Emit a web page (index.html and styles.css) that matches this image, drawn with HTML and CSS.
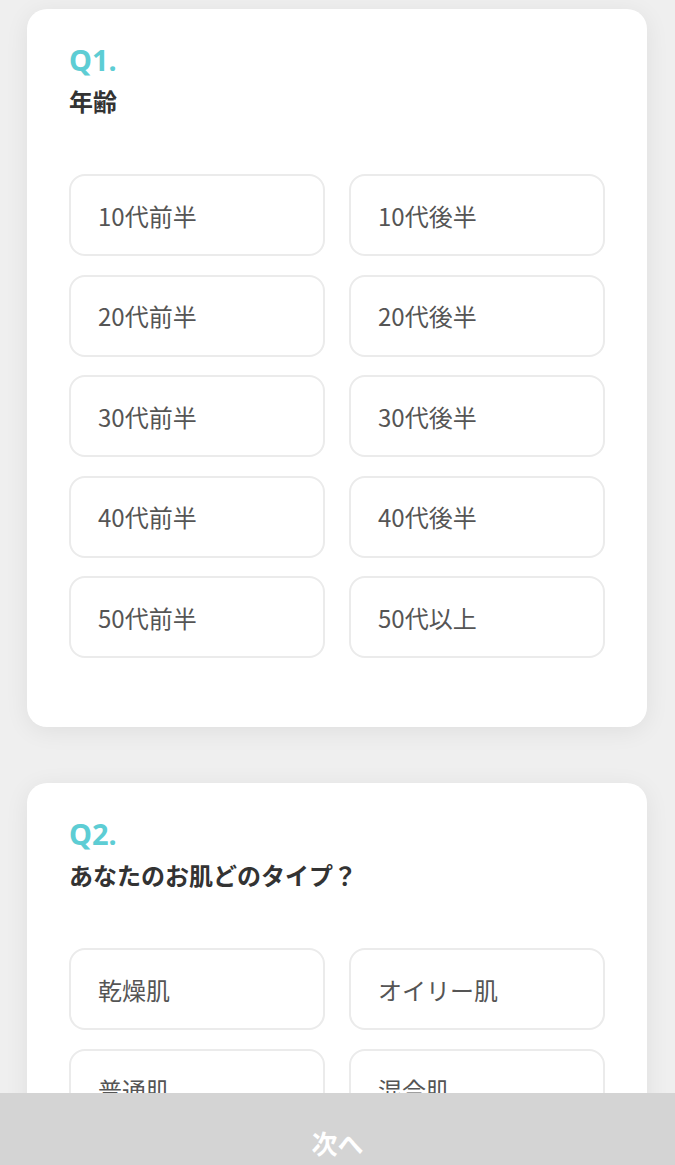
FILE: index.html
```html
<!DOCTYPE html>
<html lang="ja">
<head>
<meta charset="utf-8">
<link rel="stylesheet" href="styles.css">
</head>
<body>
<main class="page">
  <section class="card">
    <div class="qnum">Q1.</div>
    <h2 class="qtitle">年齢</h2>
    <div class="options">
      <div class="opt">10代前半</div>
      <div class="opt">10代後半</div>
      <div class="opt">20代前半</div>
      <div class="opt">20代後半</div>
      <div class="opt">30代前半</div>
      <div class="opt">30代後半</div>
      <div class="opt">40代前半</div>
      <div class="opt">40代後半</div>
      <div class="opt">50代前半</div>
      <div class="opt">50代以上</div>
    </div>
  </section>
  <section class="card">
    <div class="qnum">Q2.</div>
    <h2 class="qtitle">あなたのお肌どのタイプ？</h2>
    <div class="options">
      <div class="opt">乾燥肌</div>
      <div class="opt">オイリー肌</div>
      <div class="opt">普通肌</div>
      <div class="opt">混合肌</div>
    </div>
  </section>
</main>
<div class="nextbar"><span class="nexttext">次へ</span></div>
</body>
</html>
```

FILE: styles.css
```css
html, body {
  margin: 0;
  padding: 0;
}
body {
  background: #efefef;
  font-family: "Noto Sans CJK JP", "Noto Sans", sans-serif;
  color: #333;
}
.page {
  display: flex;
  flex-direction: column;
  gap: 56px;
  padding: 9px 28px 120px 27px;
}
.card {
  background: #fff;
  border-radius: 20px;
  box-shadow: 0 4px 24px rgba(0, 0, 0, 0.07);
  padding: 37px 42px 69px 42px;
}
.qnum {
  font-family: "Noto Sans", "Noto Sans CJK JP", sans-serif;
  font-weight: 700;
  font-size: 29px;
  line-height: 28px;
  color: #5dcdd4;
}
.qtitle {
  margin: 13px 0 0 0;
  font-size: 24px;
  line-height: 28px;
  font-weight: 700;
  color: #333;
}
.options {
  margin-top: 59px;
  display: grid;
  grid-template-columns: 1fr 1fr;
  column-gap: 24px;
  row-gap: 18.5px;
}
.opt {
  height: 78px;
  border: 2px solid #ebebeb;
  border-radius: 16px;
  display: flex;
  align-items: center;
  padding-left: 27px;
  font-size: 24px;
  color: #555;
}
.nextbar {
  position: fixed;
  left: 0;
  right: 0;
  bottom: 0;
  height: 72px;
  background: #d4d4d4;
  display: flex;
  justify-content: center;
  padding-top: 35px;
  box-sizing: border-box;
}
.nexttext {
  color: #fff;
  font-weight: 700;
  font-size: 26px;
  line-height: 30px;
}
```
